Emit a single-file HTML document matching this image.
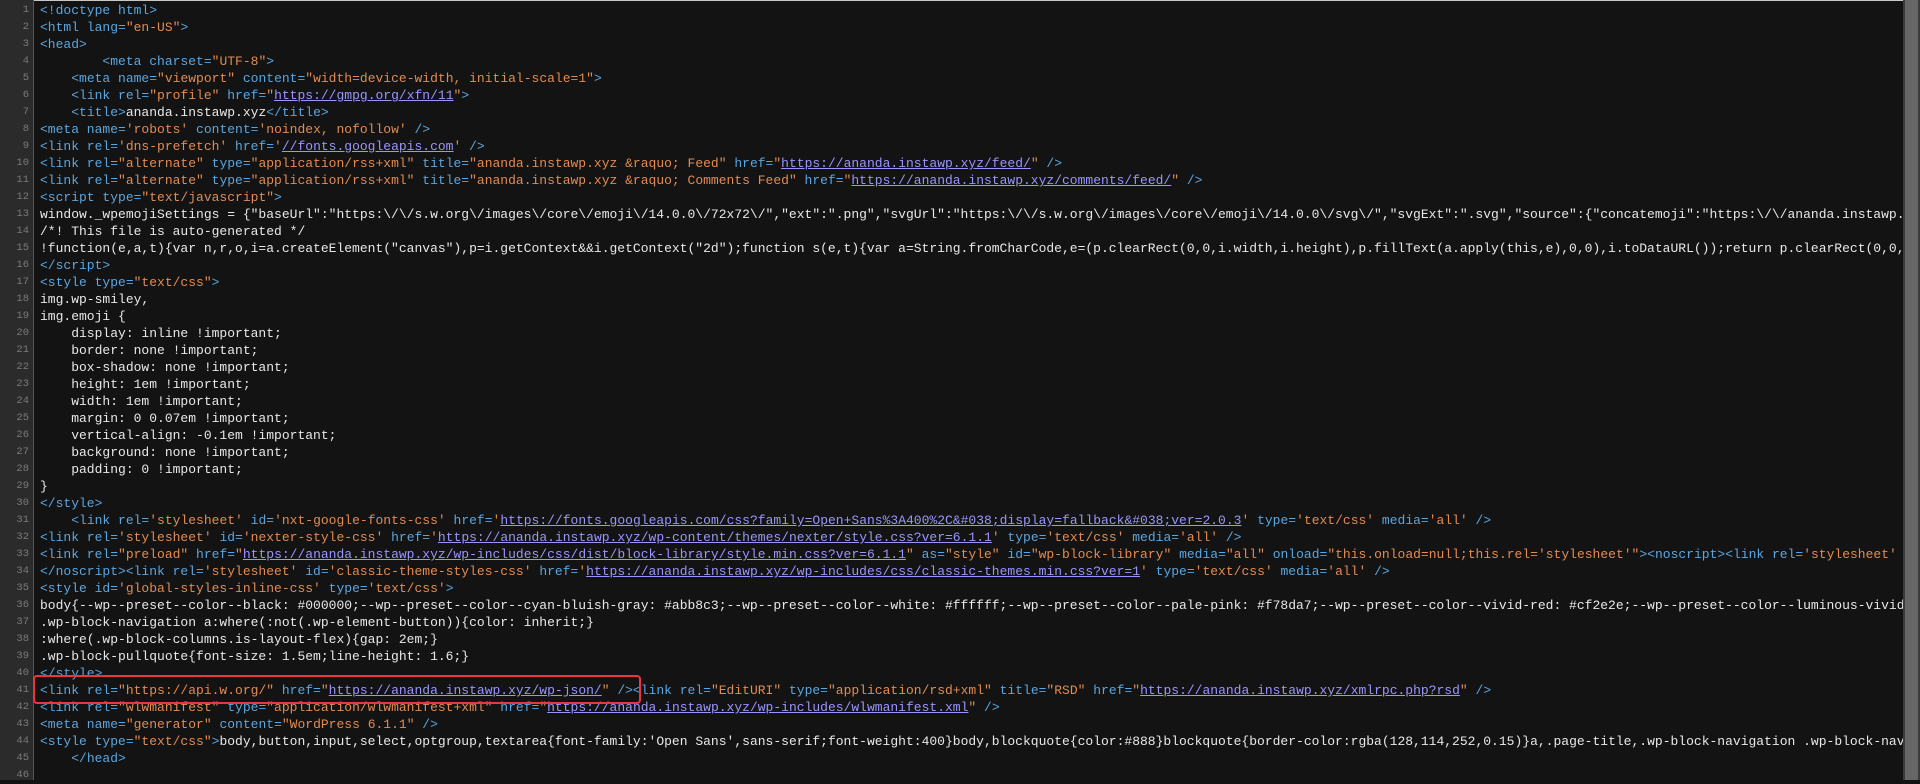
<!DOCTYPE html>
<html><head><meta charset="utf-8"><style>
html,body{margin:0;padding:0;background:#131313;width:1920px;height:780px;overflow:hidden}
.top{position:absolute;left:0;top:0;width:1903px;height:1px;background:#c8c8c8}
.gut{position:absolute;left:0;top:0;width:33px;height:780px;background:#2b2b2b;border-right:1px solid #555}
.nums{position:absolute;left:0;top:2px;width:29px;text-align:right;font:10.5px/17px "Liberation Mono",monospace;color:#7a7a7a}
.code{position:absolute;left:40px;top:2px;width:1863px;overflow:hidden;font:13px/17px "Liberation Mono",monospace;color:#e8e8e8;white-space:pre}
.b{color:#5aa6e0}.o{color:#e38b52}.l{color:#9b95ff;text-decoration:underline}
.sb{position:absolute;left:1903px;top:0;width:17px;height:780px;background:#3b3b3b}
.sb div{position:absolute;left:2px;top:0;width:13px;height:780px;background:#676767}
.box{position:absolute;left:33px;top:675px;width:604px;height:25px;border:2.5px solid #e8383d;border-radius:4px}
</style></head><body>
<div class="top"></div>
<div class="gut"></div>
<div class="nums">1<br>2<br>3<br>4<br>5<br>6<br>7<br>8<br>9<br>10<br>11<br>12<br>13<br>14<br>15<br>16<br>17<br>18<br>19<br>20<br>21<br>22<br>23<br>24<br>25<br>26<br>27<br>28<br>29<br>30<br>31<br>32<br>33<br>34<br>35<br>36<br>37<br>38<br>39<br>40<br>41<br>42<br>43<br>44<br>45<br>46</div>
<div class="code"><span class="b">&lt;!doctype html&gt;</span>
<span class="b">&lt;html lang=</span><span class="o">"en-US"</span><span class="b">&gt;</span>
<span class="b">&lt;head&gt;</span>
        <span class="b">&lt;meta charset=</span><span class="o">"UTF-8"</span><span class="b">&gt;</span>
    <span class="b">&lt;meta name=</span><span class="o">"viewport"</span><span class="b"> content=</span><span class="o">"width=device-width, initial-scale=1"</span><span class="b">&gt;</span>
    <span class="b">&lt;link rel=</span><span class="o">"profile"</span><span class="b"> href=</span><span class="o">"</span><span class="l">https://gmpg.org/xfn/11</span><span class="o">"</span><span class="b">&gt;</span>
    <span class="b">&lt;title&gt;</span>ananda.instawp.xyz<span class="b">&lt;/title&gt;</span>
<span class="b">&lt;meta name=</span><span class="o">'robots'</span><span class="b"> content=</span><span class="o">'noindex, nofollow'</span><span class="b"> /&gt;</span>
<span class="b">&lt;link rel=</span><span class="o">'dns-prefetch'</span><span class="b"> href=</span><span class="o">'</span><span class="l">//fonts.googleapis.com</span><span class="o">'</span><span class="b"> /&gt;</span>
<span class="b">&lt;link rel=</span><span class="o">"alternate"</span><span class="b"> type=</span><span class="o">"application/rss+xml"</span><span class="b"> title=</span><span class="o">"ananda.instawp.xyz &amp;raquo; Feed"</span><span class="b"> href=</span><span class="o">"</span><span class="l">https://ananda.instawp.xyz/feed/</span><span class="o">"</span><span class="b"> /&gt;</span>
<span class="b">&lt;link rel=</span><span class="o">"alternate"</span><span class="b"> type=</span><span class="o">"application/rss+xml"</span><span class="b"> title=</span><span class="o">"ananda.instawp.xyz &amp;raquo; Comments Feed"</span><span class="b"> href=</span><span class="o">"</span><span class="l">https://ananda.instawp.xyz/comments/feed/</span><span class="o">"</span><span class="b"> /&gt;</span>
<span class="b">&lt;script type=</span><span class="o">"text/javascript"</span><span class="b">&gt;</span>
window._wpemojiSettings = {"baseUrl":"https:\/\/s.w.org\/images\/core\/emoji\/14.0.0\/72x72\/","ext":".png","svgUrl":"https:\/\/s.w.org\/images\/core\/emoji\/14.0.0\/svg\/","svgExt":".svg","source":{"concatemoji":"https:\/\/ananda.instawp.xyz\/wp-includes\/js\/wp-emoji-release.min.js"}};
/*! This file is auto-generated */
!function(e,a,t){var n,r,o,i=a.createElement("canvas"),p=i.getContext&amp;&amp;i.getContext("2d");function s(e,t){var a=String.fromCharCode,e=(p.clearRect(0,0,i.width,i.height),p.fillText(a.apply(this,e),0,0),i.toDataURL());return p.clearRect(0,0,i.width,i.height)
<span class="b">&lt;/script&gt;</span>
<span class="b">&lt;style type=</span><span class="o">"text/css"</span><span class="b">&gt;</span>
img.wp-smiley,
img.emoji {
    display: inline !important;
    border: none !important;
    box-shadow: none !important;
    height: 1em !important;
    width: 1em !important;
    margin: 0 0.07em !important;
    vertical-align: -0.1em !important;
    background: none !important;
    padding: 0 !important;
}
<span class="b">&lt;/style&gt;</span>
    <span class="b">&lt;link rel=</span><span class="o">'stylesheet'</span><span class="b"> id=</span><span class="o">'nxt-google-fonts-css'</span><span class="b"> href=</span><span class="o">'</span><span class="l">https://fonts.googleapis.com/css?family=Open+Sans%3A400%2C&amp;#038;display=fallback&amp;#038;ver=2.0.3</span><span class="o">'</span><span class="b"> type=</span><span class="o">'text/css'</span><span class="b"> media=</span><span class="o">'all'</span><span class="b"> /&gt;</span>
<span class="b">&lt;link rel=</span><span class="o">'stylesheet'</span><span class="b"> id=</span><span class="o">'nexter-style-css'</span><span class="b"> href=</span><span class="o">'</span><span class="l">https://ananda.instawp.xyz/wp-content/themes/nexter/style.css?ver=6.1.1</span><span class="o">'</span><span class="b"> type=</span><span class="o">'text/css'</span><span class="b"> media=</span><span class="o">'all'</span><span class="b"> /&gt;</span>
<span class="b">&lt;link rel=</span><span class="o">"preload"</span><span class="b"> href=</span><span class="o">"</span><span class="l">https://ananda.instawp.xyz/wp-includes/css/dist/block-library/style.min.css?ver=6.1.1</span><span class="o">"</span><span class="b"> as=</span><span class="o">"style"</span><span class="b"> id=</span><span class="o">"wp-block-library"</span><span class="b"> media=</span><span class="o">"all"</span><span class="b"> onload=</span><span class="o">"this.onload=null;this.rel='stylesheet'"</span><span class="b">&gt;&lt;noscript&gt;&lt;link rel=</span><span class="o">'stylesheet'</span>
<span class="b">&lt;/noscript&gt;&lt;link rel=</span><span class="o">'stylesheet'</span><span class="b"> id=</span><span class="o">'classic-theme-styles-css'</span><span class="b"> href=</span><span class="o">'</span><span class="l">https://ananda.instawp.xyz/wp-includes/css/classic-themes.min.css?ver=1</span><span class="o">'</span><span class="b"> type=</span><span class="o">'text/css'</span><span class="b"> media=</span><span class="o">'all'</span><span class="b"> /&gt;</span>
<span class="b">&lt;style id=</span><span class="o">'global-styles-inline-css'</span><span class="b"> type=</span><span class="o">'text/css'</span><span class="b">&gt;</span>
body{--wp--preset--color--black: #000000;--wp--preset--color--cyan-bluish-gray: #abb8c3;--wp--preset--color--white: #ffffff;--wp--preset--color--pale-pink: #f78da7;--wp--preset--color--vivid-red: #cf2e2e;--wp--preset--color--luminous-vivid-orange: #ff6900;
.wp-block-navigation a:where(:not(.wp-element-button)){color: inherit;}
:where(.wp-block-columns.is-layout-flex){gap: 2em;}
.wp-block-pullquote{font-size: 1.5em;line-height: 1.6;}
<span class="b">&lt;/style&gt;</span>
<span class="b">&lt;link rel=</span><span class="o">"https://api.w.org/"</span><span class="b"> href=</span><span class="o">"</span><span class="l">https://ananda.instawp.xyz/wp-json/</span><span class="o">"</span><span class="b"> /&gt;&lt;link rel=</span><span class="o">"EditURI"</span><span class="b"> type=</span><span class="o">"application/rsd+xml"</span><span class="b"> title=</span><span class="o">"RSD"</span><span class="b"> href=</span><span class="o">"</span><span class="l">https://ananda.instawp.xyz/xmlrpc.php?rsd</span><span class="o">"</span><span class="b"> /&gt;</span>
<span class="b">&lt;link rel=</span><span class="o">"wlwmanifest"</span><span class="b"> type=</span><span class="o">"application/wlwmanifest+xml"</span><span class="b"> href=</span><span class="o">"</span><span class="l">https://ananda.instawp.xyz/wp-includes/wlwmanifest.xml</span><span class="o">"</span><span class="b"> /&gt;</span>
<span class="b">&lt;meta name=</span><span class="o">"generator"</span><span class="b"> content=</span><span class="o">"WordPress 6.1.1"</span><span class="b"> /&gt;</span>
<span class="b">&lt;style type=</span><span class="o">"text/css"</span><span class="b">&gt;</span>body,button,input,select,optgroup,textarea{font-family:'Open Sans',sans-serif;font-weight:400}body,blockquote{color:#888}blockquote{border-color:rgba(128,114,252,0.15)}a,.page-title,.wp-block-navigation .wp-block-navigation-item
    <span class="b">&lt;/head&gt;</span>
</div>
<div class="box"></div>
<div class="sb"><div></div></div>
</body></html>
